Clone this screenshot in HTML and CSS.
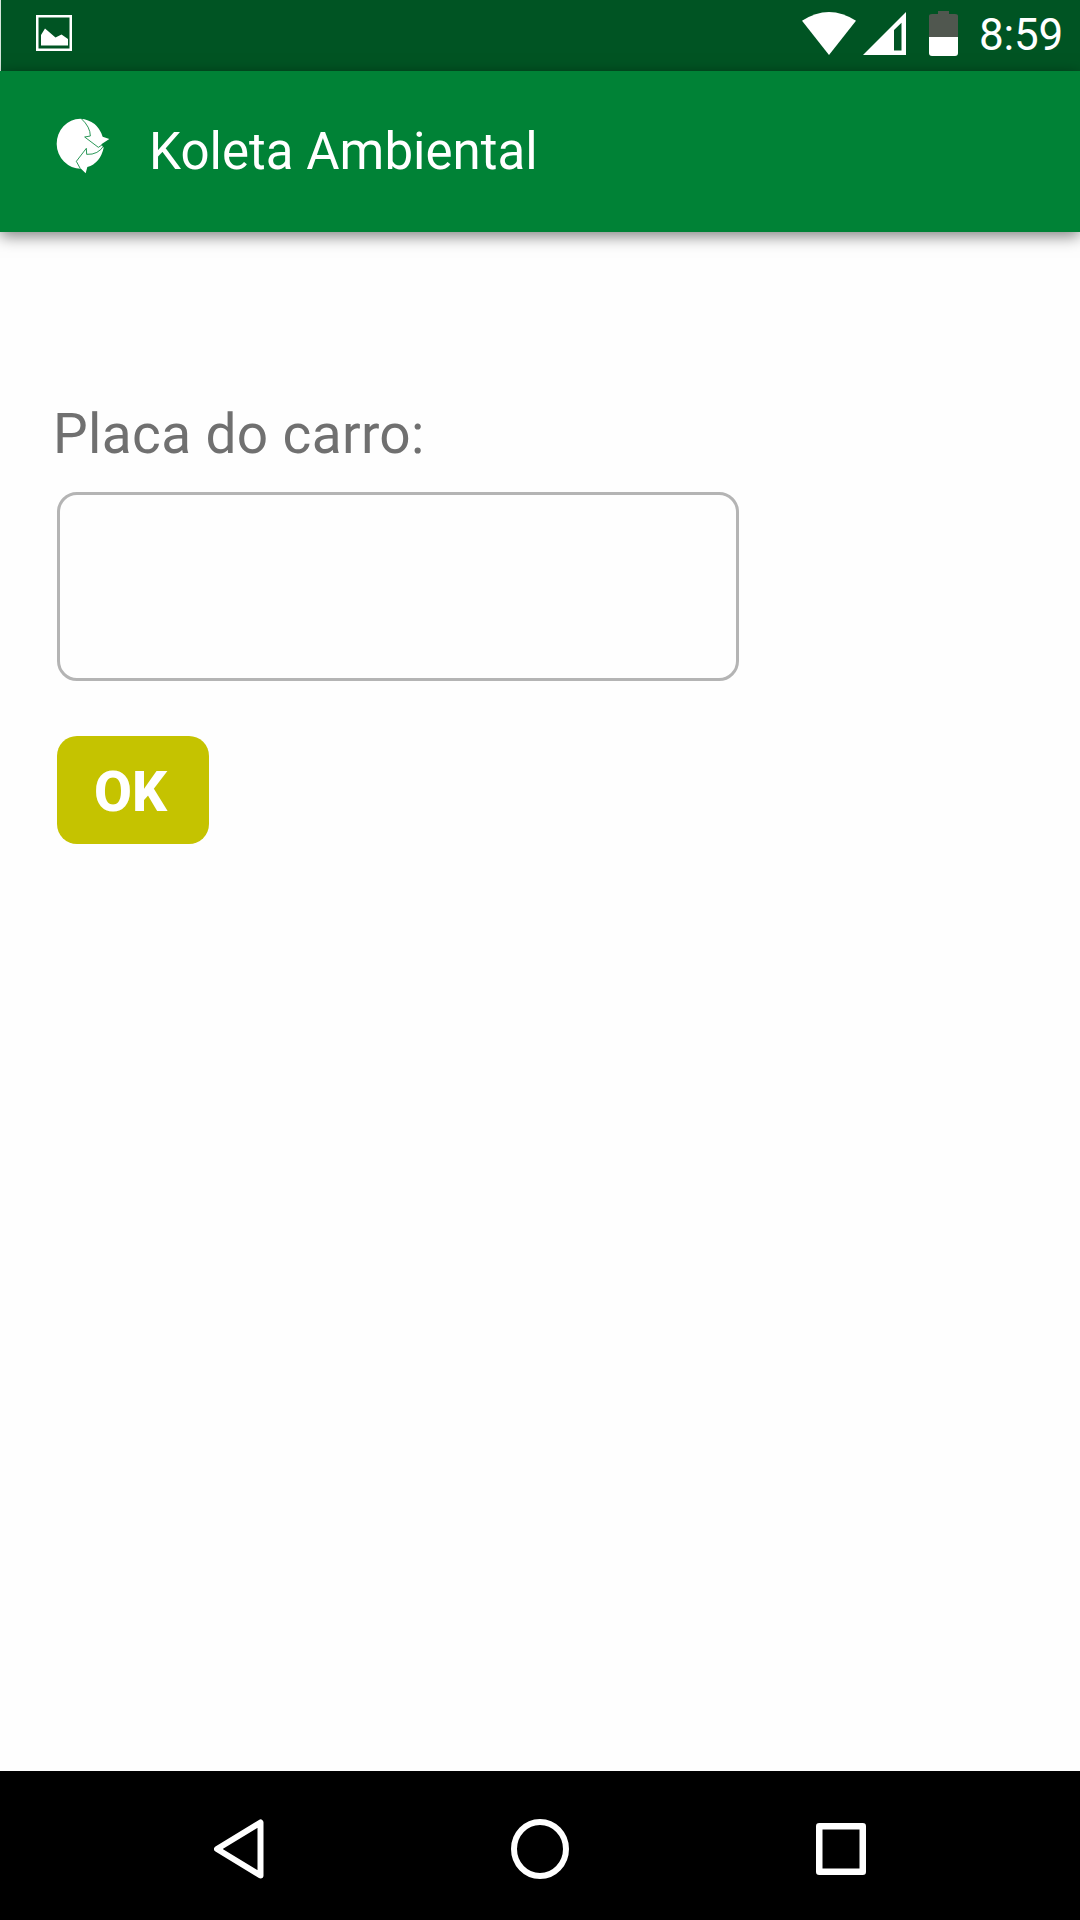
FILE: index.html
```html
<!DOCTYPE html>
<html lang="pt-BR">
<head>
<meta charset="utf-8">
<title>Koleta Ambiental</title>
<link rel="stylesheet" href="styles.css">
</head>
<body>
<div class="screen">
  <div class="status-bar">
    <svg class="picture-icon" width="36" height="36" viewBox="0 0 36 36">
      <rect x="1.25" y="1.25" width="33.5" height="33.5" fill="none" stroke="#fff" stroke-width="2.5"/>
      <path d="M5 30.5V20L9 13.5L19.500 22.500L25.500 19.500L32 24V30.500Z" fill="#fff"/>
    </svg>
    <div class="status-right">
      <svg class="wifi-icon" width="54" height="43" viewBox="0 0 54 44" preserveAspectRatio="none">
        <path d="M0 9Q27-9 54 9L27 44Z" fill="#fff"/>
      </svg>
      <svg class="signal-icon" width="43" height="43" viewBox="0 0 43 44" preserveAspectRatio="none">
        <path fill-rule="evenodd" d="M43 0V44H0ZM38.500 11L31 18.500V39.500H38.500Z" fill="#fff"/>
      </svg>
      <svg class="battery-icon" width="29" height="45" viewBox="0 0 29 45">
        <path d="M0 26V5Q0 3 3 3H9V0H20V3H26Q29 3 29 5V26Z" fill="#50574f"/>
        <path d="M0 26H29V42Q29 45 26 45H3Q0 45 0 42Z" fill="#fff"/>
      </svg>
      <span class="clock">8:59</span>
    </div>
  </div>
  <header class="app-bar">
    <svg class="logo" width="54" height="56" viewBox="50 55 162 168">
      <path d="M123 57A72 75 0 1 0 125 207L139 221L144 202Q183 190 193 144L186 134L210 118L190 111Q174 61 123 57Z" fill="#fff"/>
      <path d="M126 57Q153 82 153 109L136 112L177 143L194 132M194 137Q177 166 142 164L141 146L111 185L123 207" fill="none" stroke="#008236" stroke-width="2.500"/>
    </svg>
    <h1 class="title">Koleta Ambiental</h1>
  </header>
  <main class="content">
    <label class="label" for="plate">Placa do carro:</label>
    <input class="plate-input" id="plate" type="text">
    <button class="ok-button" type="button">OK</button>
  </main>
  <nav class="nav-bar">
    <svg width="50" height="60" viewBox="0 0 50 60"><path d="M3 30L46.500 3.500V56.500Z" fill="none" stroke="#fff" stroke-width="6" stroke-linejoin="round"/></svg>
    <svg width="58" height="60" viewBox="0 0 58 60"><ellipse cx="29" cy="30" rx="26" ry="27" fill="none" stroke="#fff" stroke-width="6"/></svg>
    <svg width="50" height="52" viewBox="0 0 50 52"><rect x="3.250" y="3.250" width="43.500" height="45.500" fill="none" stroke="#fff" stroke-width="6.500" stroke-linejoin="round"/></svg>
  </nav>
</div>
</body>
</html>
```
FILE: styles.css
```css
* {
  box-sizing: border-box;
}

body {
  margin: 0;
  font-family: Roboto, "Liberation Sans", sans-serif;
}

svg {
  display: block;
  flex: none;
}

.screen {
  display: flex;
  flex-direction: column;
  width: 1080px;
  height: 1920px;
  overflow: hidden;
  background: #fefefe;
}

.status-bar {
  display: flex;
  justify-content: space-between;
  align-items: flex-start;
  height: 71px;
  flex: none;
  padding: 11px 17px 0 35px;
  border-left: 1px solid #d5e5db;
  background: #005423;
}

.picture-icon {
  margin-top: 4px;
}

.status-right {
  display: flex;
}

.wifi-icon {
  margin: 1px 7px 0 0;
}

.signal-icon {
  margin: 1px 23px 0 0;
}

.battery-icon {
  margin-right: 21px;
}

.clock {
  font-size: 44px;
  line-height: 48px;
  letter-spacing: -0.2px;
  color: #fff;
}

.app-bar {
  display: flex;
  align-items: flex-start;
  flex: none;
  height: 161px;
  padding: 47px 0 0 56px;
  background: #008236;
  box-shadow: 0 4px 15px rgba(0, 0, 0, 0.5);
}

.title {
  margin: 4px 0 0 39px;
  font-size: 51px;
  font-weight: 400;
  line-height: 60px;
  letter-spacing: 0.05px;
  color: #fff;
}

.content {
  display: flex;
  flex: 1;
  flex-direction: column;
  align-items: flex-start;
  padding: 170px 57px 0;
}

.label {
  margin-left: -4px;
  font-size: 55px;
  line-height: 64px;
  letter-spacing: 0.35px;
  color: #707070;
}

.plate-input {
  width: 682px;
  height: 189px;
  margin: 26px 0 55px;
  padding: 0 24px;
  border: 3px solid #b4b4b4;
  border-radius: 20px;
  outline: none;
  background: #fefefe;
  font: inherit;
  font-size: 55px;
}

.ok-button {
  width: 152px;
  height: 108px;
  padding: 4px 5px 0 0;
  border: 0;
  border-radius: 20px;
  background: #c5c300;
  font: inherit;
  font-size: 55px;
  font-weight: 800;
  color: #fff;
}

.nav-bar {
  display: flex;
  justify-content: space-between;
  align-items: center;
  flex: none;
  height: 149px;
  padding: 6px 214px 0;
  background: #000;
}
```
